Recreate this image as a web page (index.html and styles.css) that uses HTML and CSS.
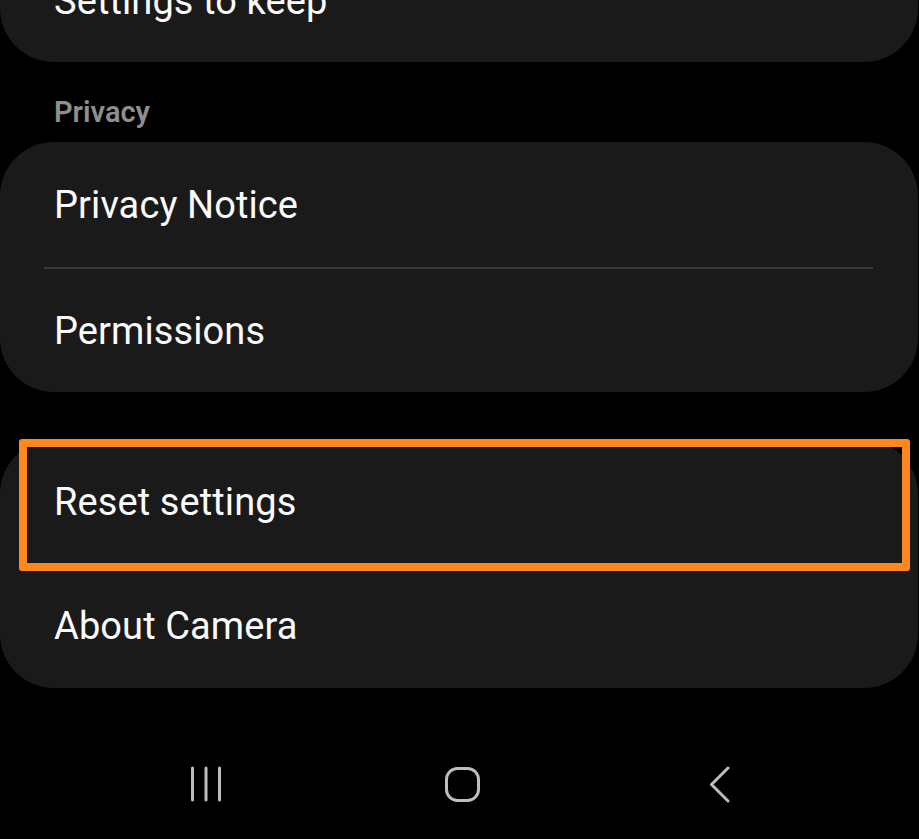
FILE: index.html
```html
<!DOCTYPE html>
<html lang="en">
<head>
<meta charset="utf-8">
<title>Camera settings</title>
<link rel="stylesheet" href="styles.css">
</head>
<body>
<div class="screen">
  <section class="card card-top">
    <div class="row row-top">Settings to keep</div>
  </section>

  <h2 class="section-title">Privacy</h2>

  <section class="card">
    <div class="row row-first">Privacy Notice</div>
    <div class="divider"></div>
    <div class="row row-second">Permissions</div>
  </section>

  <section class="card card-last">
    <div class="row">Reset settings</div>
    <div class="row">About Camera</div>
  </section>

  <div class="highlight"></div>

  <nav class="navbar">
    <div class="nav-item">
      <svg class="icon-recent" width="34" height="36" viewBox="0 0 34 36" aria-label="Recent apps">
        <line x1="3.5" y1="2" x2="3.5" y2="34"/>
        <line x1="17" y1="2" x2="17" y2="34"/>
        <line x1="30.5" y1="2" x2="30.5" y2="34"/>
      </svg>
    </div>
    <div class="nav-item">
      <svg class="icon-home" width="35" height="35" viewBox="0 0 35 35" aria-label="Home">
        <rect x="1.5" y="1.5" width="32" height="32" rx="11" ry="11"/>
      </svg>
    </div>
    <div class="nav-item">
      <svg class="icon-back" width="21" height="37" viewBox="0 0 21 37" aria-label="Back">
        <polyline points="19,2 2.5,18.5 19,35"/>
      </svg>
    </div>
  </nav>
</div>
</body>
</html>
```

FILE: styles.css
```css
html, body {
  margin: 0;
  padding: 0;
  background: #000;
}

body {
  width: 919px;
  height: 839px;
  overflow: hidden;
  font-family: Roboto, "Noto Sans", "Liberation Sans", sans-serif;
  color: #fafafa;
}

.screen {
  position: relative;
  display: flex;
  flex-direction: column;
  width: 919px;
  height: 839px;
}

.card {
  background: #1a1a1a;
  border-radius: 54px;
  width: 918px;
  display: flex;
  flex-direction: column;
}

.card-top {
  margin-top: -60px;
  border-radius: 0 0 54px 54px;
}

.row {
  height: 124px;
  display: flex;
  align-items: center;
  padding-left: 54px;
  font-size: 38px;
  font-weight: 400;
  letter-spacing: 0.1px;
}

.row-top {
  height: 122px;
}

.row-first {
  height: 125px;
}

.row-second {
  height: 123px;
}

.divider {
  height: 2px;
  margin: 0 45px 0 44px;
  background: #3a3a3a;
}

.section-title {
  margin: 0;
  padding: 36px 0 0 54px;
  height: 44px;
  font-size: 29px;
  line-height: 29px;
  font-weight: 600;
  color: #8e8e8e;
}

.card-last {
  margin-top: 48px;
}

.highlight {
  position: absolute;
  left: 19px;
  top: 439px;
  width: 891px;
  height: 132px;
  box-sizing: border-box;
  border: 8px solid #ff881e;
  border-radius: 3px;
}

.navbar {
  margin-top: 48px;
  height: 96px;
  padding: 0 71px 0 77px;
  display: grid;
  grid-template-columns: repeat(3, 257px);
  align-items: center;
  justify-items: center;
}

.nav-item {
  display: flex;
  align-items: center;
  justify-content: center;
}

.nav-item svg {
  display: block;
  fill: none;
  stroke: #bdbdbd;
  stroke-width: 3;
  stroke-linecap: round;
  stroke-linejoin: round;
}
```
